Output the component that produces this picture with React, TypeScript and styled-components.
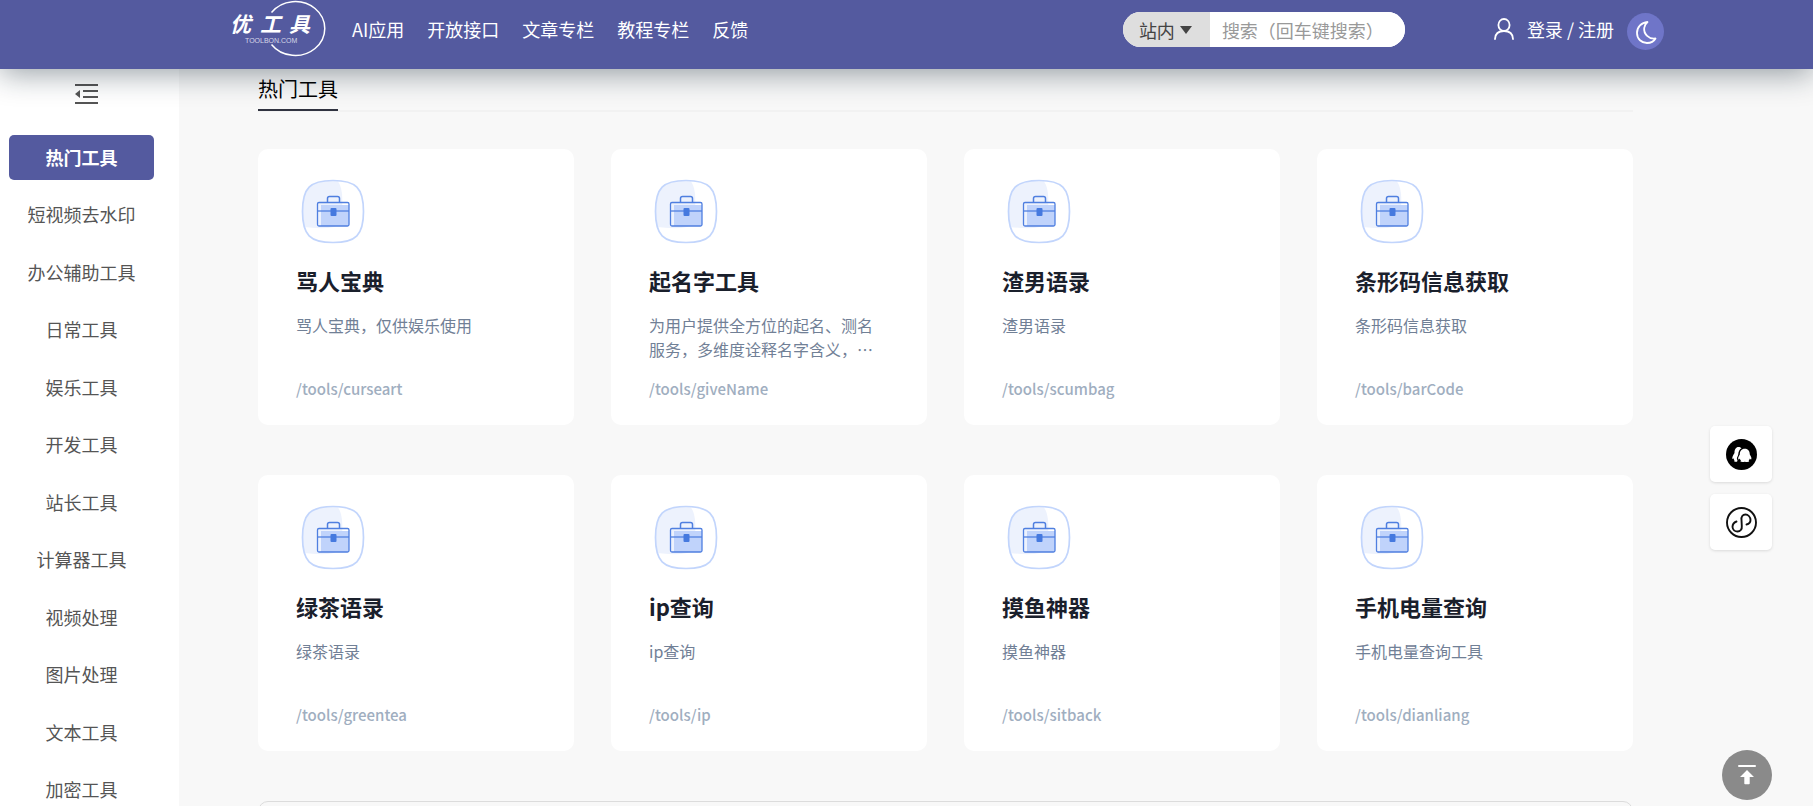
import React from 'react';
import styled, { createGlobalStyle } from 'styled-components';

const GlobalStyle = createGlobalStyle`
  *, *::before, *::after { box-sizing: border-box; }
  body {
    margin: 0;
    background: #f8f8f8;
    font-family: 'Noto Sans CJK SC', 'Noto Sans', sans-serif;
    color: #000;
    overflow: hidden;
  }
  a { color: inherit; text-decoration: none; }
  button, input, select { font-family: inherit; }
  h1, h2, p, ul { margin: 0; padding: 0; }
  ul { list-style: none; }
`;

const Header = styled.header`
  position: sticky;
  top: 0;
  z-index: 10;
  display: flex;
  align-items: flex-start;
  height: 69px;
  padding: 0 149px 0 229px;
  background: #545a9f;
  color: #fff;
  font-size: 18px;
  line-height: 26px;
  box-shadow: 0 5px 30px rgba(12, 31, 46, 0.42);
`;

const Logo = styled.a`
  display: block;
  height: 58px;

  svg { display: block; }
`;

const Nav = styled.nav`
  display: flex;
  gap: 23px;
  margin: 16px auto 0 24px;
  white-space: nowrap;
`;

const Search = styled.form`
  display: flex;
  width: 282px;
  height: 35px;
  margin-top: 12px;
  overflow: hidden;
  border-radius: 18px;
  background: #fff;
`;

const ScopeWrap = styled.label`
  display: flex;
  align-items: center;
  flex: none;
  width: 87px;
  padding-left: 16px;
  background: #dedede;
  color: #444;
`;

const Scope = styled.select`
  appearance: none;
  width: 41px;
  padding: 0;
  border: 0;
  background: none;
  color: #444;
  font-size: 18px;
  line-height: 26px;
`;

const SearchInput = styled.input`
  flex: 1;
  min-width: 0;
  padding: 0 12px;
  border: 0;
  outline: 0;
  background: #fff;
  font-size: 18px;

  &::placeholder { color: #999; }
`;

const Login = styled.a`
  display: flex;
  align-items: center;
  gap: 13px;
  margin: 16px 13px 0 89px;
  white-space: nowrap;
`;

const ThemeButton = styled.button`
  display: flex;
  align-items: center;
  justify-content: center;
  flex: none;
  width: 37px;
  height: 37px;
  margin-top: 13px;
  padding: 0;
  border: 0;
  border-radius: 50%;
  background: #6f75c8;
`;

const Body = styled.div`
  display: flex;
  height: calc(100vh - 69px);
`;

const Sidebar = styled.aside`
  flex: none;
  width: 179px;
  padding: 14px 25px 0 9px;
  overflow: hidden;
  background: #fff;
`;

const Collapse = styled.button`
  display: block;
  margin: 0 0 30px 66px;
  padding: 0;
  border: 0;
  background: none;
  height: 22px;

  svg { display: block; }
`;

const Menu = styled.ul`
  display: grid;
  grid-auto-rows: 45px;
  align-content: space-between;
  height: calc(100vh - 129px);
`;

const MenuLink = styled.a<{ $active?: boolean }>`
  display: block;
  border-radius: 5px;
  background: ${(p) => (p.$active ? '#545a9f' : 'transparent')};
  color: ${(p) => (p.$active ? '#fff' : '#555')};
  font-size: 18px;
  font-weight: ${(p) => (p.$active ? 700 : 400)};
  line-height: 45px;
  text-align: center;
`;

const Main = styled.main`
  flex: 1;
  min-width: 0;
  padding: 0 180px 0 79px;
  overflow: hidden;
`;

const SectionHead = styled.div`
  display: flex;
  height: 43px;
  margin-bottom: 37px;
  box-shadow: inset 0 -2px #f2f2f2;
`;

const SectionTitle = styled.h1`
  height: 42px;
  padding-top: 5px;
  border-bottom: 2px solid #303340;
  font-size: 20px;
  font-weight: 400;
  line-height: 29px;
`;

const Cards = styled.div`
  display: grid;
  grid-template-columns: repeat(4, 1fr);
  gap: 50px 37px;
`;

const Card = styled.a`
  display: flex;
  flex-direction: column;
  padding: 26px 38px 24px;
  border-radius: 10px;
  background: #fff;

  svg { display: block; }
`;

const CardTitle = styled.h2`
  margin: 14px 0 17px;
  color: #1a202c;
  font-size: 22px;
  font-weight: 700;
  line-height: 32px;
`;

const CardText = styled.p`
  height: 48px;
  margin-bottom: 16px;
  padding-right: 8px;
  color: #718096;
  font-size: 16px;
  line-height: 24px;
`;

const CardPath = styled.p`
  color: #a0aec0;
  font-size: 15px;
  font-weight: 500;
  line-height: 24px;
`;

const NextPanel = styled.section`
  height: 200px;
  margin-top: 50px;
  border: 1px solid #dcdcdc;
  border-radius: 10px;
`;

const Floating = styled.div`
  position: fixed;
  right: 41px;
  bottom: 6px;
  z-index: 5;
  display: flex;
  flex-direction: column;
  align-items: flex-end;
  gap: 12px;
`;

const FloatLink = styled.a`
  display: flex;
  align-items: center;
  justify-content: center;
  width: 62px;
  height: 56px;
  border-radius: 5px;
  background: #fff;
  box-shadow: 0 1px 3px rgba(0, 0, 0, 0.12);
`;

const TopButton = styled.button`
  display: flex;
  align-items: center;
  justify-content: center;
  width: 50px;
  height: 50px;
  margin-top: 188px;
  padding: 0;
  border: 0;
  border-radius: 50%;
  background: #8a8a8a;
`;

const LogoMark = () => (
  <svg width="99" height="58" viewBox="0 0 99 58" fill="none" role="img" aria-label="优工具">
    <path d="M42.500 12.500A29.500 27 0 1 1 42.500 44.500" stroke="#fff" strokeWidth="1.500" />
    <g fill="#fff" fontFamily="'Noto Sans CJK SC', sans-serif" fontSize="21" fontWeight="700" fontStyle="italic">
      <text x="1" y="32">优</text>
      <text x="31" y="32">工</text>
      <text x="60" y="32">具</text>
    </g>
    <text x="16" y="43" fill="#d5d6e8" fontFamily="'Liberation Sans', sans-serif" fontSize="7">TOOLBON.COM</text>
  </svg>
);

const UserIcon = () => (
  <svg width="20" height="22" viewBox="0 0 20 22" fill="none" stroke="#fff" strokeWidth="1.8" strokeLinecap="round">
    <ellipse cx="10" cy="7" rx="5.6" ry="6" />
    <path d="M1 21c.2-5 3.600-8 9-8s8.800 3 9 8" />
  </svg>
);

const MoonIcon = () => (
  <svg width="22" height="24" viewBox="0 0 22 24" fill="none" stroke="#fff" strokeWidth="1.8" strokeLinejoin="round">
    <path d="M12.500 2C6.500 2.500 2 7 2 13s4.500 10 10 10c4 0 7-1.800 8.500-4.500C14 19.500 8.500 14 9.200 8c.3-2.500 1.500-4.500 3.300-6z" />
  </svg>
);

const CollapseIcon = () => (
  <svg width="23" height="22" viewBox="0 0 23 22" fill="#555">
    <path d="M0 1h23v2H0zM8 7h15v2H8zM8 13h15v2H8zM0 19h23v2H0zM0 11l5-4v8z" />
  </svg>
);

const Briefcase = () => (
  <svg width="75" height="75" viewBox="0 0 75 75" fill="none">
    <path d="M8 52C6 38 6 20 12 13C17 6 30 6 42 6.500C46 12 47 22 46 34C46 43 44 50 38 52C28 54 18 53 8 52Z" fill="#edf2fd" />
    <path d="M37 5.500C60 5.500 67.500 13 67.500 36.500C67.500 60 60 67.500 37 67.500C14 67.500 6.500 60 6.500 36.500C6.500 13 14 5.500 37 5.500Z" stroke="#c2d5fc" strokeWidth="1.700" />
    <path d="M25 30h28v21H25z" fill="#c0d3fb" />
    <rect x="21.500" y="27.500" width="31.500" height="23.500" rx="1.500" stroke="#4f7fe0" strokeWidth="1.300" />
    <path d="M31.500 27.500v-4a2 2 0 0 1 2-2h8a2 2 0 0 1 2 2v4" stroke="#4f7fe0" strokeWidth="1.500" />
    <path d="M21.500 36h31.500" stroke="#4f7fe0" strokeWidth="1.300" />
    <rect x="34.500" y="33" width="6" height="8" rx="1" fill="#4579df" />
  </svg>
);

const QqGroupIcon = () => (
  <svg width="31" height="31" viewBox="0 0 31 31">
    <circle cx="15.500" cy="15.500" r="15.500" fill="#000" />
    <path d="M14.500 8.500c-4-1.500-6 1.500-6 5.500-1.500 2.500-2.800 5-2 6 .5 0 .9-.4 1.200-.7 0 1 .2 1.700.8 2.200-.8.5-.5 1.500 2.500 1.300.7-1 .5-1.500.2-2-1-2 .8-3.500 1-5 .2-3 1.200-5.500 3.300-6.500z" fill="#fff" />
    <path d="M18.800 9.800c-3.500 0-5 2.700-5 5.700-1.600 2.300-2 4.300-1.300 5 .6 0 1-.5 1.300-1 .2 1 .6 1.600 1.200 2.100-1.300.7-.6 1.800 3.800 1.200 4.500.6 5.100-.5 3.800-1.200.6-.5 1-1.100 1.200-2.100.3.500.7 1 1.300 1 .7-.7.3-2.700-1.300-5 0-3-1.500-5.700-5-5.700z" fill="#fff" />
  </svg>
);

const MiniProgramIcon = () => (
  <svg width="31" height="31" viewBox="0 0 31 31" fill="none" stroke="#111" strokeWidth="1.900" strokeLinecap="round">
    <circle cx="15.500" cy="15.500" r="14.500" />
    <path d="M20.500 17.500c2.400-.6 4-2.200 4-4.500-.2-3.200-2.500-5.500-5-5.500-2.800 0-4.500 2.200-4 5.500l.3 6c.4 3.300-1.500 5.500-4.300 5.500-2.500 0-4.800-1.800-5-4.500 0-2.300 1.600-4.500 4-5.500" />
  </svg>
);

const ToTopIcon = () => (
  <svg width="20" height="20" viewBox="0 0 20 20" fill="#fff">
    <rect x="1" y="0" width="18" height="2" rx="1" />
    <path d="M10 5l7 7h-4.300v6.500a.8.8 0 0 1-.8.800H8.100a.8.8 0 0 1-.8-.8V12H3z" />
  </svg>
);

const navItems = ['AI应用', '开放接口', '文章专栏', '教程专栏', '反馈'];

const menuItems = [
  '热门工具', '短视频去水印', '办公辅助工具', '日常工具', '娱乐工具', '开发工具',
  '站长工具', '计算器工具', '视频处理', '图片处理', '文本工具', '加密工具',
];

const tools = [
  { name: '骂人宝典', text: '骂人宝典，仅供娱乐使用', path: '/tools/curseart' },
  { name: '起名字工具', text: '为用户提供全方位的起名、测名服务，多维度诠释名字含义，…', path: '/tools/giveName' },
  { name: '渣男语录', text: '渣男语录', path: '/tools/scumbag' },
  { name: '条形码信息获取', text: '条形码信息获取', path: '/tools/barCode' },
  { name: '绿茶语录', text: '绿茶语录', path: '/tools/greentea' },
  { name: 'ip查询', text: 'ip查询', path: '/tools/ip' },
  { name: '摸鱼神器', text: '摸鱼神器', path: '/tools/sitback' },
  { name: '手机电量查询', text: '手机电量查询工具', path: '/tools/dianliang' },
];

export default function App() {
  return (
    <>
      <GlobalStyle />
      <Header>
        <Logo href="#"><LogoMark /></Logo>
        <Nav>
          {navItems.map((item) => <a key={item} href="#">{item}</a>)}
        </Nav>
        <Search onSubmit={(e) => e.preventDefault()}>
          <ScopeWrap>
            <Scope aria-label="搜索范围"><option>站内</option></Scope>
            <svg width="12" height="8" viewBox="0 0 12 8" fill="#444"><path d="M0 0h12L6 8z" /></svg>
          </ScopeWrap>
          <SearchInput aria-label="搜索" placeholder="搜索（回车键搜索）" />
        </Search>
        <Login href="#"><UserIcon />登录 / 注册</Login>
        <ThemeButton type="button" aria-label="切换主题"><MoonIcon /></ThemeButton>
      </Header>
      <Body>
        <Sidebar>
          <Collapse type="button" aria-label="收起菜单"><CollapseIcon /></Collapse>
          <Menu>
            {menuItems.map((item, i) => (
              <li key={item}><MenuLink href="#" $active={i === 0}>{item}</MenuLink></li>
            ))}
          </Menu>
        </Sidebar>
        <Main>
          <SectionHead><SectionTitle>热门工具</SectionTitle></SectionHead>
          <Cards>
            {tools.map((tool) => (
              <Card key={tool.path} href="#">
                <Briefcase />
                <CardTitle>{tool.name}</CardTitle>
                <CardText>{tool.text}</CardText>
                <CardPath>{tool.path}</CardPath>
              </Card>
            ))}
          </Cards>
          <NextPanel />
        </Main>
      </Body>
      <Floating>
        <FloatLink href="#" aria-label="QQ群"><QqGroupIcon /></FloatLink>
        <FloatLink href="#" aria-label="小程序"><MiniProgramIcon /></FloatLink>
        <TopButton type="button" aria-label="返回顶部"><ToTopIcon /></TopButton>
      </Floating>
    </>
  );
}
